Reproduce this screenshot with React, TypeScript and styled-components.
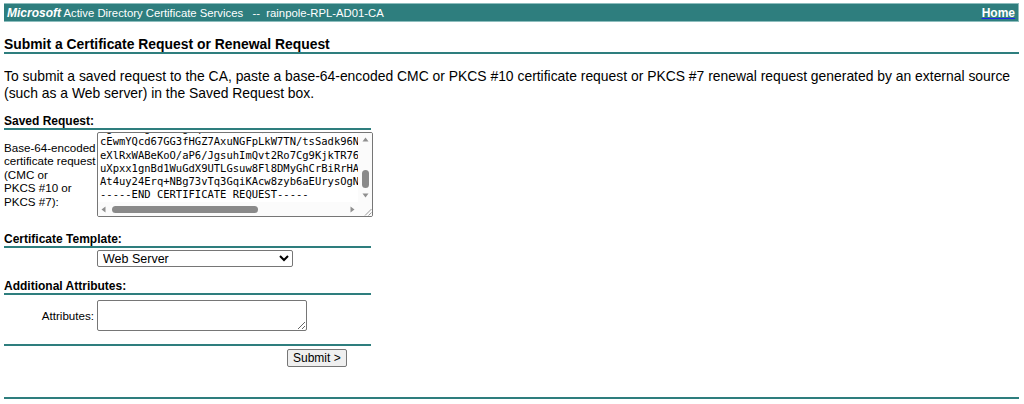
import React, { useEffect, useRef } from "react";
import styled, { createGlobalStyle } from "styled-components";

const TEAL = "#2e7e7e";

const Global = createGlobalStyle`
  html, body { background: #ffffff; }
  body {
    margin: 3px 5px 0 4px;
    font-family: "Liberation Sans", Arial, sans-serif;
    color: #000;
  }
`;

const Header = styled.div`
  display: flex;
  align-items: center;
  justify-content: space-between;
  height: 19px;
  box-sizing: border-box;
  margin-left: -1px;
  padding: 0 3px 0 3px;
  background: ${TEAL};
  border: 1px solid #8dbdbd;
  color: #fff;
  font-size: 11.3px;
`;

const Brand = styled.span`
  white-space: pre;
  b { font-style: italic; font-size: 12px; }
`;

const HomeLink = styled.a`
  color: #fff;
  font-size: 12px;
  font-weight: bold;
  text-decoration: underline;
  text-decoration-color: #2222ee;
  cursor: pointer;
`;

const Heading = styled.h1`
  margin: 15px 0 0 0;
  font-size: 13.9px;
  line-height: 15px;
  font-weight: bold;
  border-bottom: 2px solid ${TEAL};
`;

const Intro = styled.p`
  margin: 14px 0 0 0;
  font-size: 13.9px;
  line-height: 17px;
`;

const Form = styled.form`
  width: 367px;
  margin-top: 12px;
`;

const SectionTitle = styled.div<{ $gap: number }>`
  margin-top: ${(p) => p.$gap}px;
  font-size: 12px;
  line-height: 14px;
  font-weight: bold;
  border-bottom: 2px solid ${TEAL};
`;

const FieldRow = styled.div<{ $gap: number }>`
  display: grid;
  grid-template-columns: 93px auto;
  align-items: center;
  margin-top: ${(p) => p.$gap}px;
`;

const Label = styled.label<{ $right?: boolean }>`
  font-size: 11.6px;
  line-height: 13.6px;
  white-space: nowrap;
  text-align: ${(p) => (p.$right ? "right" : "left")};
  padding-right: ${(p) => (p.$right ? "3px" : "0")};
`;

/* Saved-request box: text area with its scroll bars drawn around it */
const RequestFrame = styled.div`
  display: grid;
  grid-template-columns: 1fr 14px;
  grid-template-rows: 1fr 14px;
  width: 276px;
  height: 85px;
  box-sizing: border-box;
  border: 1px solid #767676;
  border-radius: 2px;
  background: #fff;
  overflow: hidden;
`;

const RequestText = styled.textarea`
  display: block;
  width: 100%;
  height: 100%;
  box-sizing: border-box;
  margin: 0;
  padding: 0 0 0 2px;
  border: none;
  outline: none;
  overflow: hidden;
  resize: none;
  font-family: "DejaVu Sans Mono", "Liberation Mono", monospace;
  font-size: 10.5px;
  line-height: 13.3px;
  color: #000;
  white-space: pre;
  background: transparent;
`;

const VBar = styled.div`
  display: flex;
  flex-direction: column;
  background: #fbfbfb;
`;

const HBar = styled.div`
  display: flex;
  align-items: center;
  background: #fbfbfb;
`;

const Arrow = styled.div<{ $w: number; $h: number }>`
  display: flex;
  align-items: center;
  justify-content: center;
  flex: none;
  width: ${(p) => p.$w}px;
  height: ${(p) => p.$h}px;
  svg { display: block; }
`;

const VTrack = styled.div`
  flex: 1;
  display: flex;
  flex-direction: column;
  justify-content: flex-end;
  align-items: center;
  padding-bottom: 1px;
`;

const HTrack = styled.div`
  flex: 1;
  display: flex;
  align-items: center;
  height: 100%;
  padding-left: 3px;
`;

const Thumb = styled.div<{ $w: string; $h: string }>`
  width: ${(p) => p.$w};
  height: ${(p) => p.$h};
  background: #8a8a8a;
  border-radius: 4px;
`;

const Corner = styled.div`
  display: flex;
  align-items: flex-end;
  justify-content: flex-end;
  background: #fbfbfb;
  svg { display: block; }
`;

const AttrBox = styled.textarea`
  width: 210px;
  height: 31px;
  box-sizing: border-box;
  margin: 0;
  border: 1px solid #767676;
  border-radius: 2px;
  resize: both;
`;

const Select = styled.select`
  width: 196px;
  height: 17px;
  box-sizing: border-box;
  margin: 0;
  padding: 0 0 0 1px;
  border: 1px solid #767676;
  border-radius: 2px;
  background: #fff;
  font-family: "Liberation Sans", Arial, sans-serif;
  font-size: 12.5px;
  color: #000;
`;

const Divider = styled.div<{ $gap: number }>`
  margin-top: ${(p) => p.$gap}px;
  border-bottom: 2px solid ${TEAL};
`;

const ButtonRow = styled.div`
  display: flex;
  margin-top: 3px;
  padding-left: 283px;
`;

const SubmitButton = styled.button`
  height: 18px;
  box-sizing: border-box;
  padding: 0 5px;
  border: 1px solid #767676;
  border-radius: 2px;
  background: #efefef;
  font-family: "Liberation Sans", Arial, sans-serif;
  font-size: 12px;
  color: #000;
  line-height: 14px;
`;

const Footer = styled.div`
  margin-top: 30px;
  border-bottom: 2px solid ${TEAL};
`;

const CSR = `-----BEGIN CERTIFICATE REQUEST-----
MIIDCjCCAfICAQAwgZQxCzAJBgNVBAYTAlVTMRMwEQYDVQQIDApDYWxpZm9ybmlh
MRIwEAYDVQQHDAlQYWxvIEFsdG8xEDAOBgNVBAoMB1JhaW5wb2xlMQwwCgYDVQQL
DANSUEwxPDA6BgNVBAMMM3JwbC12Y2YtdmNzYTAxLnJhaW5wb2xlLmlvIG1hbmFn
ZW1lbnQgY29ubmVjdGlvbiBjZXJ0MIIBIjANBgkqhkiG9w0BAQEFAAOCAQ8AMIIB
CgKCAQEAx2Lq7Fz0QkP1vNnR8tWbYc3KdU6eHa9sJm4Xo5Zr1pLgTyVwB0iQfEhC
u3MdNaS8kRjOl2GtWzYv7xPb9cIeF6hKqUmDs1nVo4ZgJrTy0LwEaBpX5iCfHd2Q
k9ReMtSu6YvNaGcWl3IhZoPjx8bDq7FmKs0UrTe1VgL4nXyOi2cHwAzRfEd5JpMb
tY8uQnGsK3oWvL9hZaPe6DcXrJ1mIfNb0TgSyq4VkUwO7ElHa2RxCzMp5jdFtBi
Qw3nR8yLpZ1vKsGe0TjHbXo6UfAm4cEiD7NrVq9Wh2lMSaYgPxz5OtJdKuBfIeQo
AgMBAAGgMDAuBgkqhkiG9w0BCQ4xITAfMB0GA1UdDgQWBBT3mXk0aLq9Rz1yPwNy
cEwmYQcd67GG3fHGZ7AxuNGFpLkW7TN/tsSadk96Nx3vQk2pLmZ8sYhT4wRfE1aB
eXlRxWABeKoO/aP6/JgsuhImQvt2Ro7Cg9KjkTR76sLqW9dNmP2vXc0hYb3KtR8u
uXpxx1gnBd1WuGdX9UTLGsuw8Fl8DMyGhCrBiRrHAq5ZkT7jNw2pVe9LmC4sXo1d
At4uy24Erq+NBg73vTq3GqiKAcw8zyb6aEUrysOgNk3PvR2
-----END CERTIFICATE REQUEST-----`;

const ARROW = "#8f8f8f";

const Tri = ({ dir }: { dir: "up" | "down" | "left" | "right" }) => {
  const pts = {
    up: "0.5,5.5 3.5,1.5 6.5,5.5",
    down: "0.5,1.5 3.5,5.5 6.5,1.5",
    left: "5.5,0.5 1.5,3.5 5.5,6.5",
    right: "1.5,0.5 5.5,3.5 1.5,6.5",
  }[dir];
  return (
    <svg width="7" height="7" viewBox="0 0 7 7">
      <polygon points={pts} fill={ARROW} />
    </svg>
  );
};

export default function App() {
  const boxRef = useRef<HTMLTextAreaElement>(null);

  useEffect(() => {
    const el = boxRef.current;
    if (el) {
      el.scrollTop = el.scrollHeight;
      el.scrollLeft = 0;
    }
  }, []);

  return (
    <>
      <Global />
      <Header>
        <Brand>
          <b>Microsoft</b> Active Directory Certificate Services {"  --  "}rainpole-RPL-AD01-CA
        </Brand>
        <HomeLink>Home</HomeLink>
      </Header>

      <Heading>Submit a Certificate Request or Renewal Request</Heading>

      <Intro>
        To submit a saved request to the CA, paste a base-64-encoded CMC or PKCS #10 certificate request or
        PKCS #7 renewal request generated by an external source (such as a Web server) in the Saved Request
        box.
      </Intro>

      <Form onSubmit={(e) => e.preventDefault()}>
        <SectionTitle $gap={0}>Saved Request:</SectionTitle>
        <FieldRow $gap={2}>
          <Label>
            Base-64-encoded
            <br />
            certificate request
            <br />
            (CMC or
            <br />
            PKCS #10 or
            <br />
            PKCS #7):
          </Label>
          <RequestFrame>
            <RequestText ref={boxRef} wrap="off" spellCheck={false} defaultValue={CSR} />
            <VBar>
              <Arrow $w={14} $h={13}>
                <Tri dir="up" />
              </Arrow>
              <VTrack>
                <Thumb $w="7px" $h="18px" />
              </VTrack>
              <Arrow $w={14} $h={13}>
                <Tri dir="down" />
              </Arrow>
            </VBar>
            <HBar>
              <Arrow $w={11} $h={14}>
                <Tri dir="left" />
              </Arrow>
              <HTrack>
                <Thumb $w="146px" $h="7px" />
              </HTrack>
              <Arrow $w={11} $h={14}>
                <Tri dir="right" />
              </Arrow>
            </HBar>
            <Corner>
              <svg width="8" height="8" viewBox="0 0 8 8">
                <line x1="7.5" y1="1" x2="1" y2="7.5" stroke="#9a9a9a" strokeWidth="1" />
                <line x1="7.5" y1="4.5" x2="4.5" y2="7.5" stroke="#9a9a9a" strokeWidth="1" />
              </svg>
            </Corner>
          </RequestFrame>
        </FieldRow>

        <SectionTitle $gap={15}>Certificate Template:</SectionTitle>
        <FieldRow $gap={2}>
          <span />
          <Select defaultValue="web">
            <option value="web">Web Server</option>
            <option value="user">User</option>
          </Select>
        </FieldRow>

        <SectionTitle $gap={12}>Additional Attributes:</SectionTitle>
        <FieldRow $gap={5}>
          <Label $right>Attributes:</Label>
          <AttrBox />
        </FieldRow>

        <Divider $gap={13} />
        <ButtonRow>
          <SubmitButton type="submit">Submit &gt;</SubmitButton>
        </ButtonRow>
      </Form>

      <Footer />
    </>
  );
}
